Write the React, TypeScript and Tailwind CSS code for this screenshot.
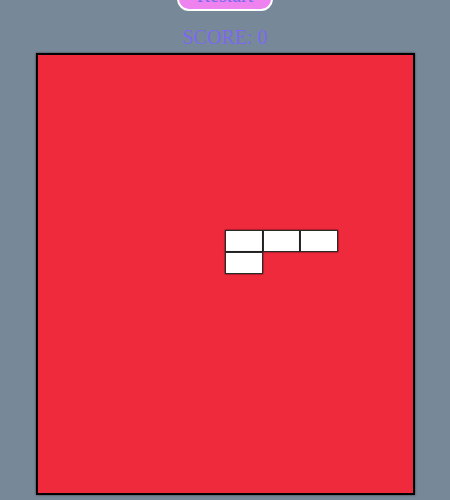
import { useState } from "react";

// ─── Board ───────────────────────────────────────────────────────────────────
const COLS = 10;
const ROWS = 20;

// current piece (L) — cells as [row, col]
const PIECE: [number, number][] = [
  [8, 5],
  [8, 6],
  [8, 7],
  [9, 5],
];

function Board() {
  const filled = new Set(PIECE.map(([r, c]) => r * COLS + c));
  return (
    <div className="mt-[4px] w-[379px] h-[442px] border-2 border-black bg-[#ee2a3c] shadow-[0_0_2px_rgba(0,0,0,0.6)] grid grid-cols-[repeat(10,1fr)] grid-rows-[repeat(20,1fr)]">
      {Array.from({ length: COLS * ROWS }).map((_, i) =>
        filled.has(i) ? (
          <div key={i} className="bg-white border border-[#2a2a2a] shadow-[0_0_1.5px_rgba(0,0,0,0.9)]" />
        ) : (
          <div key={i} />
        )
      )}
    </div>
  );
}

// ─── Main ────────────────────────────────────────────────────────────────────
export default function App() {
  const [score] = useState(0);

  return (
    <div className="min-h-[500px] bg-[#778899] flex flex-col items-center overflow-hidden font-['Liberation_Serif',serif] text-[#7b68ee]">
      <button className="mt-[-20px] w-[96px] px-2 py-[2px] text-[20px] leading-[23px] bg-[#ee82ee] border-2 border-white rounded-[12px] text-[#7b68ee]">
        Restart
      </button>
      <div className="mt-[15px] text-[20px] leading-[23px]">SCORE: {score}</div>
      <Board />
    </div>
  );
}
